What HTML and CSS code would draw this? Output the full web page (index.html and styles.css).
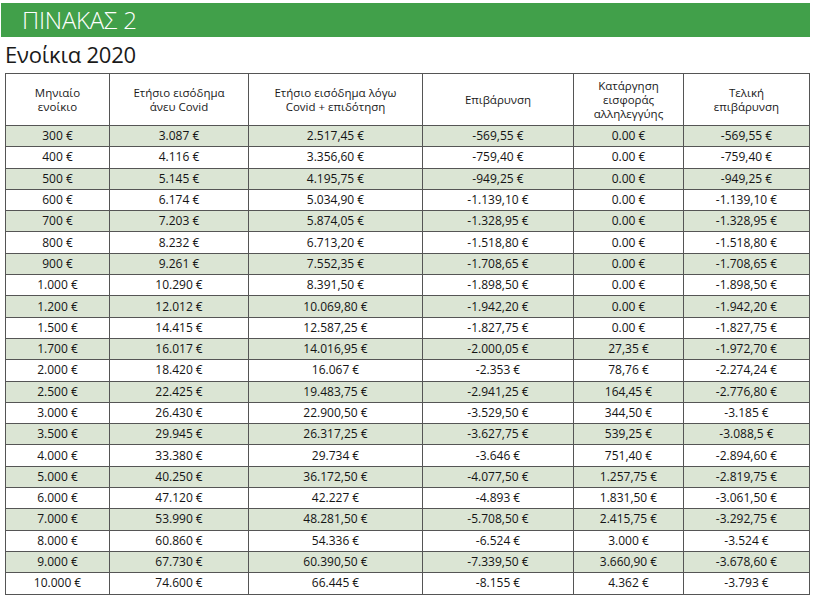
FILE: index.html
```html
<!DOCTYPE html>
<html lang="el">
<head>
<meta charset="utf-8">
<title>Πίνακας 2</title>
<link rel="stylesheet" href="styles.css">
</head>
<body>
<div class="banner">ΠΙΝΑΚΑΣ 2</div>
<h1 class="title">Ενοίκια 2020</h1>
<table class="data">
<colgroup>
<col class="c1"><col class="c2"><col class="c3"><col class="c4"><col class="c5"><col class="c6">
</colgroup>
<thead>
<tr>
<th>Μηνιαίο<br>ενοίκιο</th>
<th>Ετήσιο εισόδημα<br>άνευ Covid</th>
<th>Ετήσιο εισόδημα λόγω<br>Covid + επιδότηση</th>
<th>Επιβάρυνση</th>
<th>Κατάργηση<br>εισφοράς<br>αλληλεγγύης</th>
<th>Τελική<br>επιβάρυνση</th>
</tr>
</thead>
<tbody>
<tr><td>300 €</td><td>3.087 €</td><td>2.517,45 €</td><td>-569,55 €</td><td>0.00 €</td><td>-569,55 €</td></tr>
<tr><td>400 €</td><td>4.116 €</td><td>3.356,60 €</td><td>-759,40 €</td><td>0.00 €</td><td>-759,40 €</td></tr>
<tr><td>500 €</td><td>5.145 €</td><td>4.195,75 €</td><td>-949,25 €</td><td>0.00 €</td><td>-949,25 €</td></tr>
<tr><td>600 €</td><td>6.174 €</td><td>5.034,90 €</td><td>-1.139,10 €</td><td>0.00 €</td><td>-1.139,10 €</td></tr>
<tr><td>700 €</td><td>7.203 €</td><td>5.874,05 €</td><td>-1.328,95 €</td><td>0.00 €</td><td>-1.328,95 €</td></tr>
<tr><td>800 €</td><td>8.232 €</td><td>6.713,20 €</td><td>-1.518,80 €</td><td>0.00 €</td><td>-1.518,80 €</td></tr>
<tr><td>900 €</td><td>9.261 €</td><td>7.552,35 €</td><td>-1.708,65 €</td><td>0.00 €</td><td>-1.708,65 €</td></tr>
<tr><td>1.000 €</td><td>10.290 €</td><td>8.391,50 €</td><td>-1.898,50 €</td><td>0.00 €</td><td>-1.898,50 €</td></tr>
<tr><td>1.200 €</td><td>12.012 €</td><td>10.069,80 €</td><td>-1.942,20 €</td><td>0.00 €</td><td>-1.942,20 €</td></tr>
<tr><td>1.500 €</td><td>14.415 €</td><td>12.587,25 €</td><td>-1.827,75 €</td><td>0.00 €</td><td>-1.827,75 €</td></tr>
<tr><td>1.700 €</td><td>16.017 €</td><td>14.016,95 €</td><td>-2.000,05 €</td><td>27,35 €</td><td>-1.972,70 €</td></tr>
<tr><td>2.000 €</td><td>18.420 €</td><td>16.067 €</td><td>-2.353 €</td><td>78,76 €</td><td>-2.274,24 €</td></tr>
<tr><td>2.500 €</td><td>22.425 €</td><td>19.483,75 €</td><td>-2.941,25 €</td><td>164,45 €</td><td>-2.776,80 €</td></tr>
<tr><td>3.000 €</td><td>26.430 €</td><td>22.900,50 €</td><td>-3.529,50 €</td><td>344,50 €</td><td>-3.185 €</td></tr>
<tr><td>3.500 €</td><td>29.945 €</td><td>26.317,25 €</td><td>-3.627,75 €</td><td>539,25 €</td><td>-3.088,5 €</td></tr>
<tr><td>4.000 €</td><td>33.380 €</td><td>29.734 €</td><td>-3.646 €</td><td>751,40 €</td><td>-2.894,60 €</td></tr>
<tr><td>5.000 €</td><td>40.250 €</td><td>36.172,50 €</td><td>-4.077,50 €</td><td>1.257,75 €</td><td>-2.819,75 €</td></tr>
<tr><td>6.000 €</td><td>47.120 €</td><td>42.227 €</td><td>-4.893 €</td><td>1.831,50 €</td><td>-3.061,50 €</td></tr>
<tr><td>7.000 €</td><td>53.990 €</td><td>48.281,50 €</td><td>-5.708,50 €</td><td>2.415,75 €</td><td>-3.292,75 €</td></tr>
<tr><td>8.000 €</td><td>60.860 €</td><td>54.336 €</td><td>-6.524 €</td><td>3.000 €</td><td>-3.524 €</td></tr>
<tr><td>9.000 €</td><td>67.730 €</td><td>60.390,50 €</td><td>-7.339,50 €</td><td>3.660,90 €</td><td>-3.678,60 €</td></tr>
<tr><td>10.000 €</td><td>74.600 €</td><td>66.445 €</td><td>-8.155 €</td><td>4.362 €</td><td>-3.793 €</td></tr>
</tbody>
</table>
</body>
</html>
```
FILE: styles.css
```css
html, body {
  margin: 0;
  padding: 0;
  background: #ffffff;
}
body {
  font-family: "Open Sans", "Noto Sans", sans-serif;
  color: #1a1a1a;
}
.banner {
  margin: 3px 5px 0 1px;
  height: 34px;
  line-height: 34px;
  padding-left: 21px;
  background: #41a04a;
  color: #ffffff;
  font-size: 24px;
  font-weight: 300;
  letter-spacing: -0.2px;
}
.title {
  margin: 4px 0 0 5px;
  font-size: 22px;
  line-height: 26px;
  font-weight: 400;
  letter-spacing: -0.2px;
  color: #1a1a1a;
}
.data {
  margin: 6px 0 0 5px;
  width: 804px;
  table-layout: fixed;
  border-collapse: collapse;
  border: 1px solid #7a7a7a;
  font-size: 12px;
}
.c1 { width: 104px; }
.c2 { width: 139px; }
.c3 { width: 174px; }
.c4 { width: 151px; }
.c5 { width: 110px; }
.c6 { width: 126px; }
.data th,
.data td {
  border: 1px solid #555555;
  padding: 0;
  text-align: center;
  vertical-align: middle;
  font-weight: 400;
}
.data th {
  height: 51px;
  line-height: 14px;
  font-size: 11.5px;
}
.data td {
  height: 20.3px;
  line-height: 14px;
  color: #141414;
}
.data tbody tr:nth-child(odd) td {
  background: #dbe5d4;
}
```
